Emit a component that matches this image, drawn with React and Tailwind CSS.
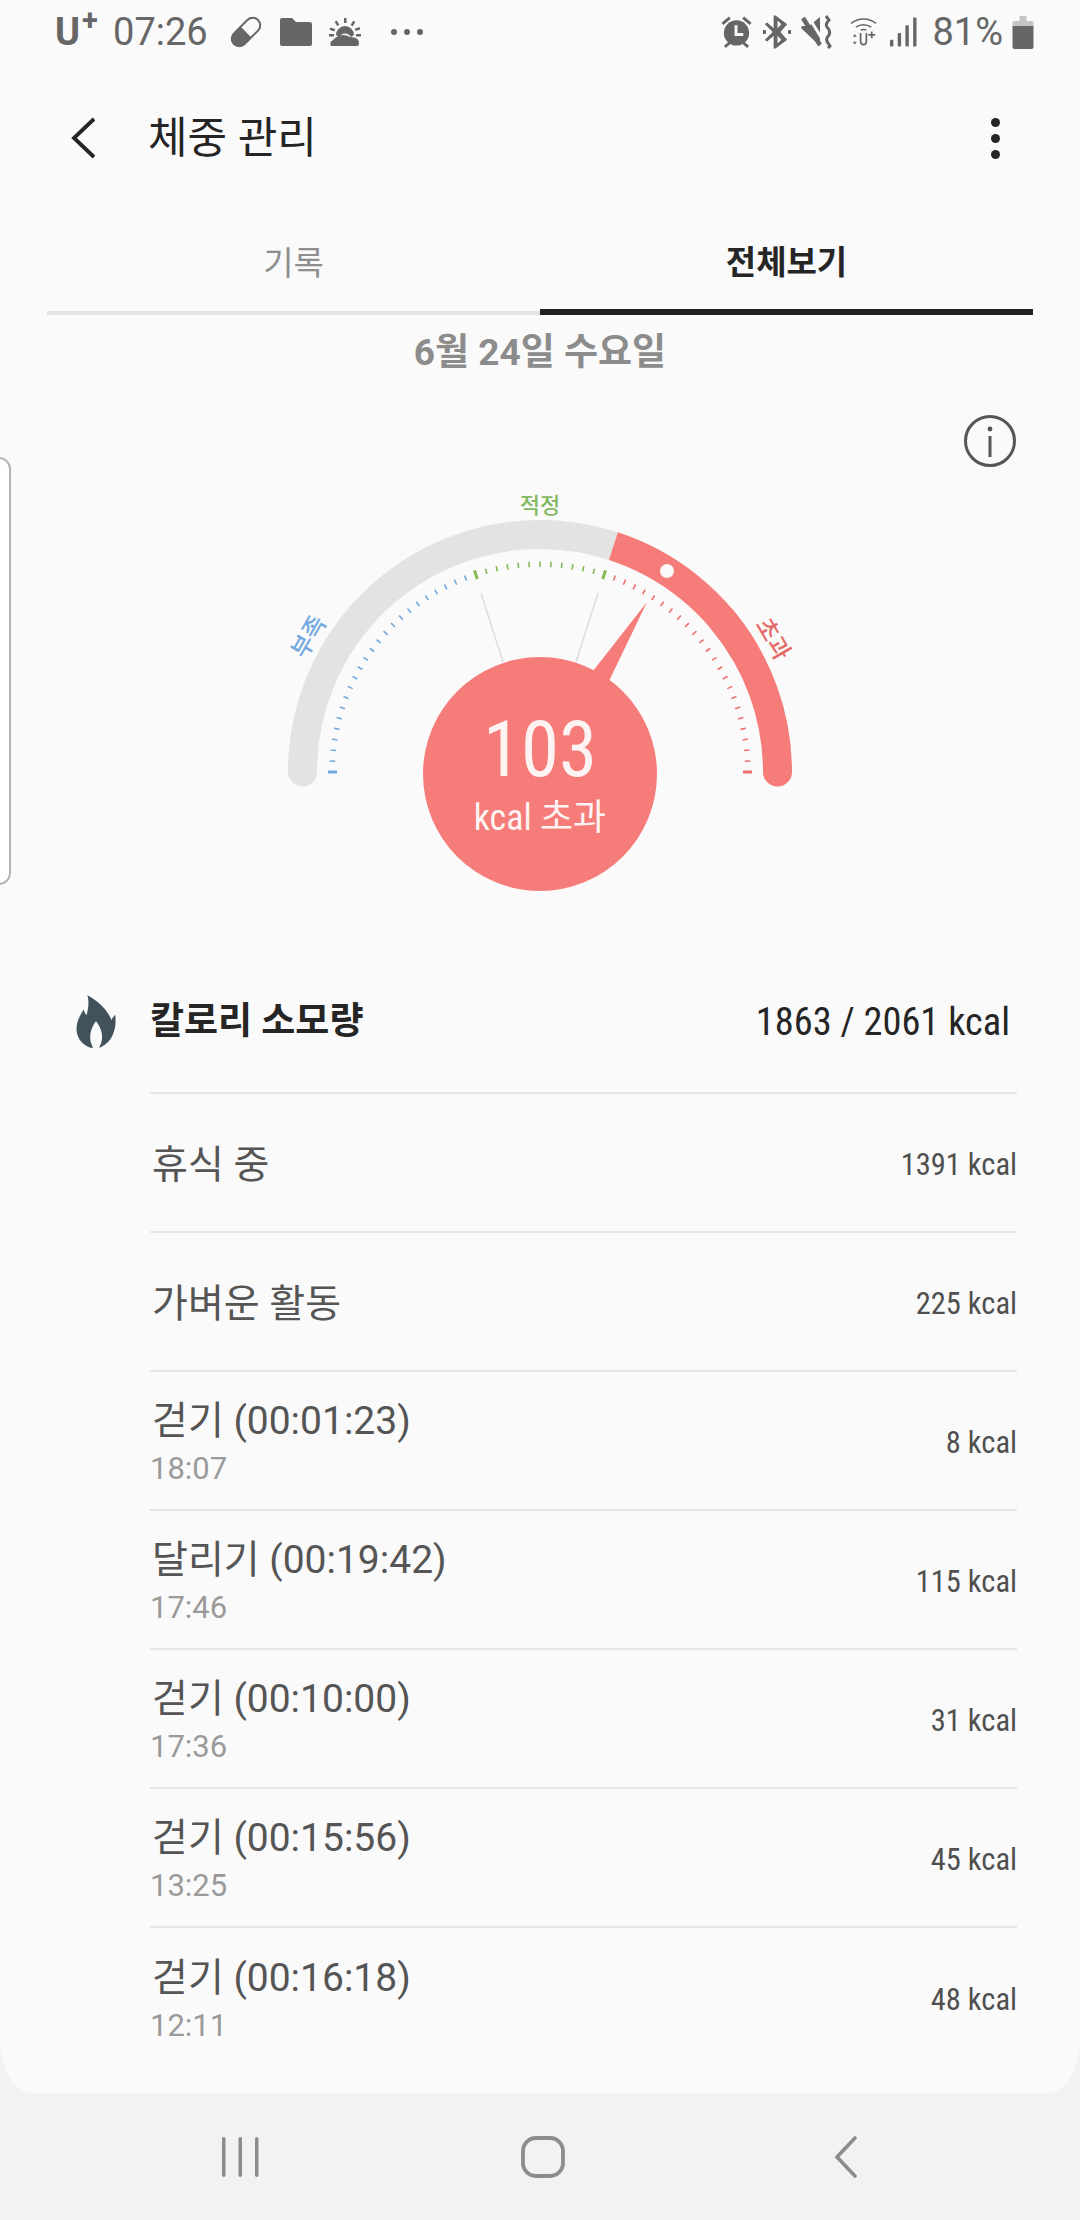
import React from 'react';

const CJK = '[font-family:Roboto,"Noto_Sans_CJK_KR",sans-serif]';
const LABEL_FONT = { fontFamily: 'Roboto, "Noto Sans CJK KR", sans-serif' };

const rows = [
  { name: '휴식 중', kcal: '1391 kcal' },
  { name: '가벼운 활동', kcal: '225 kcal' },
  { name: '걷기 (00:01:23)', time: '18:07', kcal: '8 kcal' },
  { name: '달리기 (00:19:42)', time: '17:46', kcal: '115 kcal' },
  { name: '걷기 (00:10:00)', time: '17:36', kcal: '31 kcal' },
  { name: '걷기 (00:15:56)', time: '13:25', kcal: '45 kcal' },
  { name: '걷기 (00:16:18)', time: '12:11', kcal: '48 kcal' },
];

// polar helper: deg is measured clockwise from straight up, around the gauge centre
const polar = (r, deg) => {
  const a = (deg * Math.PI) / 180;
  return [r * Math.sin(a), -r * Math.cos(a)];
};

const arc = (r, from, to) => {
  const [x1, y1] = polar(r, from);
  const [x2, y2] = polar(r, to);
  return `M${x1} ${y1}A${r} ${r} 0 0 1 ${x2} ${y2}`;
};

const ticks = [];
for (let d = -90; d <= 90; d += 3) ticks.push(d);

const tickColor = (d) => (d < -18 ? '#74a9e0' : d <= 18 ? '#84bb55' : '#ef6f6f');

const Gauge = () => (
  <div className="relative h-[485px] w-full">
    <svg width="1080" height="485" viewBox="-540 -305 1080 485" className="absolute left-0 top-0">
      <path d={arc(237.5, -90, 5)} fill="none" stroke="#e3e3e1" strokeWidth="29" strokeLinecap="round" />
      <path d={arc(237.5, 0, 18)} fill="none" stroke="#e3e3e1" strokeWidth="29" />
      <path d={arc(237.5, 50, 90)} fill="none" stroke="#f57c78" strokeWidth="29" strokeLinecap="round" />
      <path d={arc(237.5, 18, 60)} fill="none" stroke="#f57c78" strokeWidth="29" />
      {ticks.map((d) => {
        const major = d === -90 || d === 90 || d === -18 || d === 18;
        const [x1, y1] = polar(major ? 203 : 205, d);
        const [x2, y2] = polar(major ? 212 : 210.5, d);
        return (
          <line
            key={d}
            x1={x1}
            y1={y1}
            x2={x2}
            y2={y2}
            stroke={tickColor(d)}
            strokeWidth={major ? 3 : 1.6}
          />
        );
      })}
      <line x1="-59" y1="-179" x2="-37" y2="-110" stroke="#dddddd" strokeWidth="1.5" />
      <line x1="58" y1="-179" x2="36" y2="-110" stroke="#dddddd" strokeWidth="1.5" />
      <polygon points="107,-170 53,-101 69,-91" fill="#f57c78" />
      <circle cx="0" cy="2" r="117" fill="#f57c78" />
      <circle cx="127" cy="-201" r="7" fill="#fafafa" />
      <text x="0" y="-259" textAnchor="middle" fontSize="22" fontWeight="500" fill="#84b860" style={LABEL_FONT}>적정</text>
      <text x="0" y="8" textAnchor="middle" fontSize="24" fontWeight="500" fill="#74a9e0" transform="translate(-231 -135) rotate(-60)" style={LABEL_FONT}>부족</text>
      <text x="0" y="8" textAnchor="middle" fontSize="24" fontWeight="500" fill="#e46a68" transform="translate(233 -133) rotate(60)" style={LABEL_FONT}>초과</text>
    </svg>
    <div className="absolute left-[423px] top-[188px] flex h-[234px] w-[234px] flex-col items-center text-[#fdf3f2]">
      <span className={`${CJK} mt-[50px] text-[77px] leading-[90px] [font-stretch:75%]`}>103</span>
      <span className={`${CJK} mt-[1px] text-[36px] leading-[44px] [font-stretch:85%]`}>kcal 초과</span>
    </div>
  </div>
);

const Flame = () => (
  <svg width="40" height="54" viewBox="0 0 42 56">
    <path
      fill="#42525c"
      fillRule="evenodd"
      d="M12 0C24 6 35 18 37 26C38 24 40 22 41 20C43 32 40 47 27 54L24 55C29 47 29 38 21 27C14 37 13 46 18 55L15 55C4 51 -1 41 1 31C2 24 6 19 8 15C9 18 10 20 11 21C13 14 14 6 12 0Z"
    />
  </svg>
);

const StatusBar = () => (
  <div className="flex h-[60px] items-center justify-between pl-[55px] pr-[46px] pt-[4px] text-[#666666]">
    <div className="flex items-center">
      <span className={`${CJK} relative text-[38px] font-bold leading-none`}>
        U<span className="absolute left-[27px] top-[-7px] text-[29px]">+</span>
      </span>
      <span className={`${CJK} ml-[33px] text-[38px] leading-none [font-stretch:95%]`}>07:26</span>
      <svg className="ml-[22px]" width="32" height="32" viewBox="0 0 32 32">
        <g transform="rotate(45 16 16)">
          <rect x="8.5" y="-1" width="15" height="34" rx="7.5" fill="none" stroke="#666" strokeWidth="2" />
          <path d="M8 16H24V25.5A8 8 0 0 1 8 25.5Z" fill="#666" />
        </g>
      </svg>
      <svg className="ml-[18px]" width="32" height="28" viewBox="0 0 32 28">
        <path d="M2 0H12L16 4H29Q32 4 32 6V26Q32 28 30 28H2Q0 28 0 26V2Q0 0 2 0Z" fill="#666" />
      </svg>
      <svg className="ml-[17px]" width="32" height="28" viewBox="0 0 32 28" fill="#666">
        <path d="M7 17A9 9 0 0 1 25 17L22 19A7 7 0 0 0 10 19Z" />
        <path d="M2 28Q0 24 4 22Q12 14 21 19Q30 19 30 25Q30 28 28 28Z" />
        <rect x="15" y="0" width="2.5" height="5" />
        <rect x="6.5" y="3" width="2.5" height="5" transform="rotate(-30 7.5 5)" />
        <rect x="23" y="3" width="2.5" height="5" transform="rotate(30 24 5)" />
        <rect x="1" y="10" width="5" height="2.5" transform="rotate(20 3 11)" />
        <rect x="26" y="10" width="5" height="2.5" transform="rotate(-20 28 11)" />
        <rect x="0" y="16" width="5" height="2.5" />
        <rect x="27" y="16" width="5" height="2.5" />
      </svg>
      <div className="ml-[30px] flex gap-[7px]">
        <span className="h-[6px] w-[6px] rounded-full bg-[#666666]" />
        <span className="h-[6px] w-[6px] rounded-full bg-[#666666]" />
        <span className="h-[6px] w-[6px] rounded-full bg-[#666666]" />
      </div>
    </div>
    <div className="flex items-center">
      <svg width="33" height="34" viewBox="0 0 34 34" fill="#666">
        <circle cx="17" cy="18" r="13" />
        <path d="M15 10H18V18H24V21H15Z" fill="#fafafa" />
        <rect x="1" y="4" width="10" height="3" transform="rotate(-40 6 5)" />
        <rect x="23" y="4" width="10" height="3" transform="rotate(40 28 5)" />
        <rect x="4" y="29" width="7" height="3" transform="rotate(-40 7 30)" />
        <rect x="23" y="29" width="7" height="3" transform="rotate(40 27 30)" />
      </svg>
      <svg className="ml-[10px]" width="29" height="34" viewBox="0 0 30 34" fill="#666">
        <path fillRule="evenodd" d="M13 0L25 9L18 17L25 25L13 34H11V21L4 27L2 25L10 17L2 9L4 7L11 13V0ZM15 5V13L19 9ZM15 21V29L19 25Z" />
        <rect x="0" y="15" width="3" height="4" />
        <rect x="26" y="15" width="3" height="4" />
      </svg>
      <svg className="ml-[9px]" width="31" height="34" viewBox="0 0 31 34">
        <path d="M0 13Q0 11 2 11H8L19 2V31Z" fill="#666" />
        <path d="M7 1L23 27" stroke="#fafafa" strokeWidth="3" />
        <path d="M2 3L19 30" stroke="#666" strokeWidth="4.5" />
        <path d="M25 1L28 5Q24 9 26 12Q30 16 28 20Q24 24 27 28L29 31L27 33" fill="none" stroke="#666" strokeWidth="3" />
      </svg>
      <svg className="ml-[18px]" width="27" height="30" viewBox="0 0 28 30" fill="none" stroke="#666">
        <path d="M1 6Q14 -3 27 6" strokeWidth="1.6" />
        <path d="M6 10Q14 5 22 10" strokeWidth="1.6" />
        <path d="M11 13Q14 12 17 13" strokeWidth="1.6" />
        <path d="M11 16V24Q11 28 14 28Q17 28 17 24V16" strokeWidth="1.8" />
        <path d="M19 18H26M22.5 14.5V21.5" strokeWidth="1.8" />
        <path d="M5 17L7 20H3ZM5 28L7 25H3Z" fill="#666" strokeWidth="0" />
      </svg>
      <svg className="ml-[13px]" width="27" height="32" viewBox="0 0 28 32" fill="#666">
        <rect x="0" y="24" width="3.5" height="7" rx="1" />
        <rect x="8" y="17" width="3.5" height="14" rx="1" />
        <rect x="16" y="9" width="3.5" height="22" rx="1" />
        <rect x="24" y="1" width="3.5" height="30" rx="1" />
      </svg>
      <span className={`${CJK} ml-[15px] text-[38px] leading-none`}>81%</span>
      <svg className="ml-[9px]" width="22" height="33" viewBox="0 0 21 33">
        <path d="M7 0H14V5H19Q21 5 21 7V10H0V7Q0 5 2 5H7Z" fill="#c4c4c4" />
        <path d="M0 10H21V31Q21 33 19 33H2Q0 33 0 31Z" fill="#666" />
      </svg>
    </div>
  </div>
);

const Row = ({ name, time, kcal }) => (
  <div className="flex h-[139px] items-center justify-between border-b-2 border-[#e6e6e6] pt-[5px] last:border-b-0">
    <div className="flex flex-col">
      <span className={`${CJK} ml-[2px] text-[39px] leading-[50px] text-[#555555]`}>{name}</span>
      {time && <span className={`${CJK} mt-[2px] text-[31px] leading-[42px] text-[#9a9a9a]`}>{time}</span>}
    </div>
    <span className={`${CJK} text-[30.5px] text-[#505050] [font-stretch:84%]`}>{kcal}</span>
  </div>
);

export default function App() {
  return (
    <div className={`${CJK} relative h-[2220px] w-[1080px] overflow-hidden bg-[#f2f2f2]`}>
      <div className="h-[2093px] rounded-b-[32px_54px] bg-[#fafafa]">
        <StatusBar />
        {/* header */}
        <div className="flex h-[114px] items-center justify-between pl-[71px] pr-[80px] pt-[42px]">
          <div className="flex items-center">
            <svg width="24" height="42" viewBox="0 0 24 42" fill="none" stroke="#252525" strokeWidth="3.8">
              <path d="M23 2L3 21L23 40" />
            </svg>
            <span className="ml-[53px] text-[43px] leading-none text-[#252525]">체중 관리</span>
          </div>
          <div className="flex flex-col gap-[7px]">
            <span className="h-[9px] w-[9px] rounded-full bg-[#252525]" />
            <span className="h-[9px] w-[9px] rounded-full bg-[#252525]" />
            <span className="h-[9px] w-[9px] rounded-full bg-[#252525]" />
          </div>
        </div>
        {/* tabs */}
        <div className="mx-[47px] flex h-[141px] items-end">
          <div className="flex h-[141px] w-[493px] items-center justify-center border-b-[4px] border-[#e4e4e4] pt-[42px] text-[33px] text-[#8e8e8e]">
            기록
          </div>
          <div className="flex h-[141px] w-[493px] items-center justify-center border-b-[6px] border-[#222222] pt-[42px] text-[33px] font-bold text-[#252525]">
            전체보기
          </div>
        </div>
        <div className="flex h-[76px] items-center justify-center text-[37px] font-bold text-[#8c8c8c]">
          6월 24일 수요일
        </div>
        <div className="flex justify-end pr-[64px] pt-[24px]">
          <svg width="52" height="52" viewBox="0 0 52 52" fill="none" stroke="#555555" strokeWidth="3">
            <circle cx="26" cy="26" r="24.5" />
            <circle cx="26" cy="14" r="2.4" fill="#555555" stroke="none" />
            <path d="M26 21V42" />
          </svg>
        </div>
        <Gauge />
        {/* calorie summary */}
        <div className="flex h-[140px] items-center pl-[76px] pr-[70px]">
          <div className="w-[74px]">
            <Flame />
          </div>
          <div className="flex flex-1 items-center justify-between">
            <span className="text-[37px] font-bold text-[#252525]">칼로리 소모량</span>
            <span className="text-[38.4px] text-[#252525] [font-stretch:87%]">1863 / 2061 kcal</span>
          </div>
        </div>
        <div className="ml-[150px] mr-[63px] border-t-2 border-[#e6e6e6]">
          {rows.map((row) => (
            <Row key={row.name} {...row} />
          ))}
        </div>
      </div>
      {/* bottom nav */}
      <div className="flex h-[127px] items-center pl-[222px]">
        <svg width="38" height="42" viewBox="0 0 38 42" fill="#8c8c8c">
          <rect x="0" y="1" width="3.5" height="40" rx="1.7" />
          <rect x="16.5" y="1" width="3.5" height="40" rx="1.7" />
          <rect x="33" y="1" width="3.5" height="40" rx="1.7" />
        </svg>
        <svg className="ml-[261px]" width="44" height="42" viewBox="0 0 44 42" fill="none" stroke="#8c8c8c" strokeWidth="3.8">
          <rect x="2" y="2" width="40" height="38" rx="13" />
        </svg>
        <svg className="ml-[270px]" width="22" height="42" viewBox="0 0 22 42" fill="none" stroke="#8c8c8c" strokeWidth="3.6" strokeLinecap="round">
          <path d="M20 2L2 21L20 40" />
        </svg>
      </div>
      {/* edge panel handle */}
      <div className="absolute left-[-10px] top-[457px] h-[428px] w-[21px] rounded-r-[12px] border-2 border-[#b4b4b4] bg-white" />
    </div>
  );
}
